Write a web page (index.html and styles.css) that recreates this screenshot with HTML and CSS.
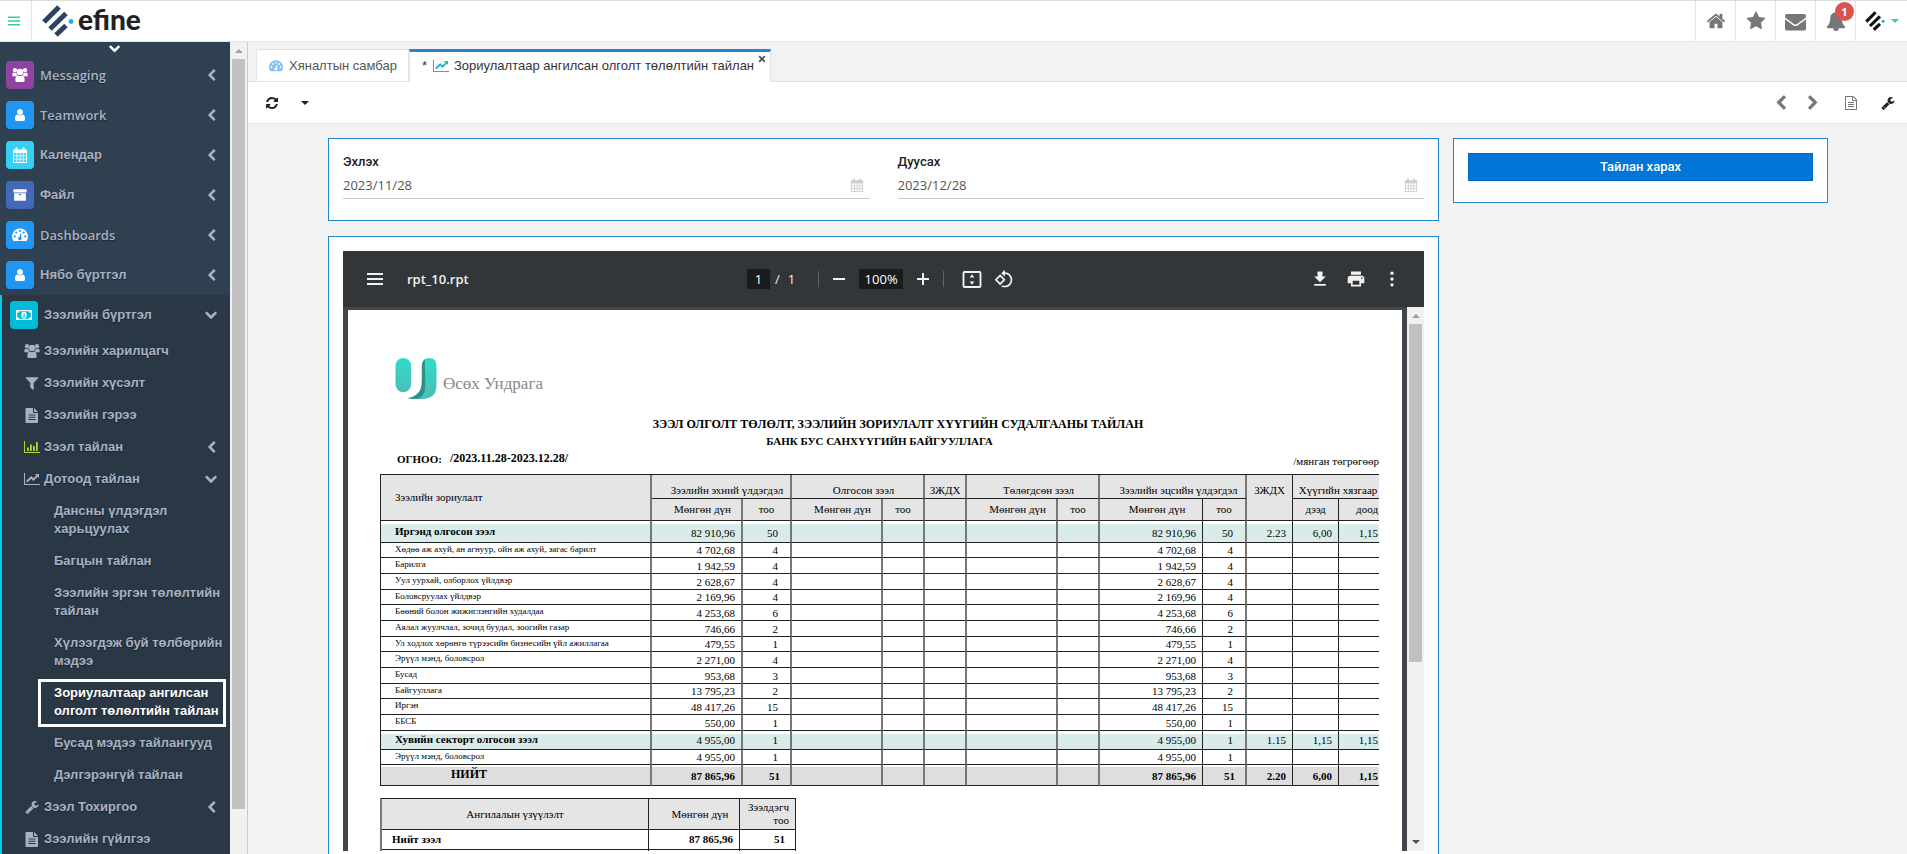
FILE: index.html
```
<!DOCTYPE html>
<html lang="mn">
<head>
<meta charset="utf-8">
<title>efine</title>
<link rel="stylesheet" href="styles.css">
</head>
<body>
<svg class="sprite" aria-hidden="true">
  <symbol id="home" viewBox="0 0 1792 1792"><path d="M1472 992v480q0 26-19 45t-45 19h-384v-384h-256v384h-384q-26 0-45-19t-19-45v-480q0-1 .5-3t.5-3l575-474 575 474q1 2 1 6zm223-69l-62 74q-8 9-21 11h-3q-13 0-21-7l-692-577-692 577q-12 8-24 7-13-2-21-11l-62-74q-8-10-7-23.5t11-21.5l719-599q32-26 76-26t76 26l244 204v-195q0-14 9-23t23-9h192q14 0 23 9t9 23v408l219 182q10 8 11 21.5t-7 23.5z"/></symbol>
  <symbol id="star" viewBox="0 0 1792 1792"><path d="M1728 647q0 22-26 48l-363 354 86 500q1 7 1 20 0 21-10.5 35.5t-30.5 14.5q-19 0-40-12l-449-236-449 236q-22 12-40 12-21 0-31.5-14.5t-10.5-35.5q0-6 2-20l86-500-364-354q-25-27-25-48 0-37 56-46l502-73 225-455q19-41 49-41t49 41l225 455 502 73q56 9 56 46z"/></symbol>
  <symbol id="mail" viewBox="0 0 1792 1792"><path d="M1792 710v794q0 66-47 113t-113 47h-1472q-66 0-113-47t-47-113v-794q44 49 101 87 362 246 497 345 57 42 92.5 65.5t94.5 48 110 24.5h2q51 0 110-24.5t94.5-48 92.5-65.5q170-123 498-345 57-39 100-87zm0-294q0 79-49 151t-122 123q-376 261-468 325-10 7-42.5 31t-54 38.5-52 32.5-57.5 27-50 9h-2q-23 0-50-9t-57.5-27-52-32.5-54-38.5-42.5-31q-91-64-262-182.5t-205-142.5q-62-42-117-115.5t-55-136.5q0-78 41.5-130t118.5-52h1472q65 0 112.5 47t47.5 113z"/></symbol>
  <symbol id="bell" viewBox="0 0 1792 1792"><path d="M1728 1408q0 52-38 90t-90 38h-448q0 106-75 181t-181 75-181-75-75-181h-448q-52 0-90-38t-38-90q50-42 91-88t85-119.5 74.5-158.5 50-206 19.5-260q0-152 117-282.5t307-158.5q-8-19-8-39 0-40 28-68t68-28 68 28 28 68q0 20-8 39 190 28 307 158.5t117 282.5q0 139 19.5 260t50 206 74.5 158.5 85 119.5 91 88z"/></symbol>
  <symbol id="left" viewBox="0 0 1792 1792"><path d="M1427 301l-531 531 531 531q19 19 19 45t-19 45l-166 166q-19 19-45 19t-45-19l-742-742q-19-19-19-45t19-45l742-742q19-19 45-19t45 19l166 166q19 19 19 45t-19 45z"/></symbol>
  <symbol id="right" viewBox="0 0 1792 1792"><path transform="translate(1792 0) scale(-1 1)" d="M1427 301l-531 531 531 531q19 19 19 45t-19 45l-166 166q-19 19-45 19t-45-19l-742-742q-19-19-19-45t19-45l742-742q19-19 45-19t45 19l166 166q19 19 19 45t-19 45z"/></symbol>
  <symbol id="down" viewBox="0 0 1792 1792"><path transform="rotate(-90 896 896)" d="M1427 301l-531 531 531 531q19 19 19 45t-19 45l-166 166q-19 19-45 19t-45-19l-742-742q-19-19-19-45t19-45l742-742q19-19 45-19t45 19l166 166q19 19 19 45t-19 45z"/></symbol>
  <symbol id="refresh" viewBox="0 0 1792 1792"><path d="M1639 1056q0 5-1 7-64 268-268 434.5t-478 166.5q-146 0-282.5-55t-243.5-157l-129 129q-19 19-45 19t-45-19-19-45v-448q0-26 19-45t45-19h448q26 0 45 19t19 45-19 45l-137 137q71 66 161 102t187 36q134 0 250-65t186-179q11-17 53-117 8-23 30-23h192q13 0 22.5 9.5t9.5 22.5zm25-800v448q0 26-19 45t-45 19h-448q-26 0-45-19t-19-45 19-45l138-138q-148-137-349-137-134 0-250 65t-186 179q-11 17-53 117-8 23-30 23h-199q-13 0-22.5-9.5t-9.5-22.5v-7q65-268 270-434.5t480-166.5q146 0 284 55.5t245 156.5l130-129q19-19 45-19t45 19 19 45z"/></symbol>
  <symbol id="wrench" viewBox="0 0 1792 1792"><path d="M448 1472q0-26-19-45t-45-19-45 19-19 45 19 45 45 19 45-19 19-45zm644-420l-682 682q-37 37-90 37-52 0-91-37l-106-108q-38-36-38-90 0-53 38-91l681-681q39 98 114.5 173.5t173.5 114.5zm634-435q0 39-23 106-47 134-164.5 217.5t-258.5 83.5q-185 0-316.5-131.5t-131.5-316.5 131.5-316.5 316.5-131.5q58 0 121.5 16.5t107.5 46.5q16 11 16 28t-16 28l-293 169v224l193 107q5-3 79-48.5t135.5-81 70.5-35.5q15 0 23.5 10t8.5 25z"/></symbol>
  <symbol id="doc" viewBox="0 0 1792 1792"><path d="M1596 380q28 28 48 76t20 88v1152q0 40-28 68t-68 28h-1344q-40 0-68-28t-28-68v-1600q0-40 28-68t68-28h896q40 0 88 20t76 48zm-444-244v376h376q-10-29-22-41l-313-313q-12-12-41-22zm384 1528v-1024h-416q-40 0-68-28t-28-68v-416h-768v1536h1280zm-1024-864q0-14 9-23t23-9h704q14 0 23 9t9 23v64q0 14-9 23t-23 9h-704q-14 0-23-9t-9-23v-64zm736 224q14 0 23 9t9 23v64q0 14-9 23t-23 9h-704q-14 0-23-9t-9-23v-64q0-14 9-23t23-9h704zm0 256q14 0 23 9t9 23v64q0 14-9 23t-23 9h-704q-14 0-23-9t-9-23v-64q0-14 9-23t23-9h704z"/></symbol>
  <symbol id="file" viewBox="0 0 16 16"><path fill-rule="evenodd" d="M2 1h7v5h5v9.200q0 .8-.8.8H2.300q-.8 0-.8-.8V1.500q0-.5.5-.5zM10 1l4 4h-4zM4.500 7.500v1h7v-1zm0 2.300v1h7v-1zm0 2.300v1h7v-1z"/></symbol>
  <symbol id="filter" viewBox="0 0 1792 1792"><path d="M1595 295q17 41-14 70l-493 493v742q0 42-39 59-13 5-25 5-27 0-45-19l-256-256q-19-19-19-45v-486l-493-493q-31-29-14-70 17-39 59-39h1280q42 0 59 39z"/></symbol>
  <symbol id="user" viewBox="0 0 1792 1792"><path d="M1536 1399q0 109-62.5 187t-150.5 78h-854q-88 0-150.5-78t-62.5-187q0-85 8.500-160.500t31.500-152 58.500-131 94-89 134.500-34.500q131 128 313 128t313-128q76 0 134.500 34.500t94 89 58.500 131 31.500 152 8.500 160.500zm-256-887q0 159-112.500 271.500t-271.500 112.500-271.500-112.500-112.500-271.500 112.500-271.500 271.500-112.500 271.500 112.500 112.500 271.500z"/></symbol>
  <symbol id="users" viewBox="0 0 16 16"><circle cx="3" cy="3.200" r="2.100"/><circle cx="13" cy="3.200" r="2.100"/><circle cx="8" cy="5" r="3.200"/><path d="M.3 8.800q-.2-3.200 1.500-3.400 1.200.7 2.500.2.200 2 1.200 2.700-1.100.1-1.700 1H1.200q-.9 0-.9-.5zM15.700 8.800q.2-3.200-1.500-3.400-1.200.7-2.500.2-.2 2-1.200 2.700 1.100.1 1.700 1h2.600q.9 0 .9-.5zM3.300 13.400q0-4.900 2.400-5 2.300 1.500 4.600 0 2.400.1 2.400 5 0 1.600-1.700 1.600H5q-1.700 0-1.700-1.600z"/></symbol>
  <symbol id="calendar" viewBox="0 0 16 16"><path fill-rule="evenodd" d="M2 2.500h1.500V1q0-.8 1-.8t1 .8v1.500h5V1q0-.8 1-.8t1 .8v1.500H14q1 0 1 1V15q0 1-1 1H2q-1 0-1-1V3.500q0-1 1-1zM2 6v2.500h2.500V6zm3.300 0v2.500h2.400V6zm3.200 0v2.500h2.300V6zm3.200 0v2.500H14V6zM2 9.300v2.400h2.500V9.300zm3.300 0v2.400h2.400V9.300zm3.200 0v2.400h2.300V9.300zm3.200 0v2.400H14V9.300zM2 12.500V15h2.500v-2.500zm3.300 0V15h2.400v-2.500zm3.200 0V15h2.300v-2.500zm3.200 0V15H14v-2.500z"/></symbol>
  <symbol id="archive" viewBox="0 0 16 16"><path fill-rule="evenodd" d="M.5 1.500h15v3.500H.5zM1.300 6h13.400v8.500H1.300zM6.500 7v1.200h3V7z"/></symbol>
  <symbol id="gauge" viewBox="0 0 16 16"><path fill-rule="evenodd" d="M8 1.500a8 8 0 0 1 6.900 12q-.3.500-.8.500H1.900q-.5 0-.8-.5A8 8 0 0 1 8 1.500zM8 3a1.100 1.100 0 1 0 0 2.200A1.100 1.100 0 0 0 8 3zM4.300 4.500a1.100 1.100 0 1 0 0 2.200 1.100 1.100 0 0 0 0-2.200zM11.700 4.500a1.100 1.100 0 1 0 0 2.200 1.100 1.100 0 0 0 0-2.200zM2.700 8.300a1.100 1.100 0 1 0 0 2.200 1.100 1.100 0 0 0 0-2.200zM13.300 8.300a1.100 1.100 0 1 0 0 2.200 1.100 1.100 0 0 0 0-2.200zM8.500 6.500l-.9 3.200a1.700 1.700 0 1 0 1.300.3l.8-3.200z"/></symbol>
  <symbol id="money" viewBox="0 0 16 16"><path fill-rule="evenodd" d="M0 3h16v10H0zM3 4.200q0 1.800-1.800 1.800v4q1.800 0 1.800 1.800h10q0-1.800 1.800-1.800V6Q13 6 13 4.200z"/><ellipse cx="8" cy="8" rx="2.700" ry="3.200"/><path class="cut" d="M7.200 6.600L8 6h.6v3.200h.6v.7H7v-.7h.7V7z"/></symbol>
  <symbol id="bars" viewBox="0 0 16 16"><path d="M0 2h1v11h15v1H0zM3 8.500h1.800V12H3zM6 5.500h1.800V12H6zM9 7h1.800v5H9zM12 3h1.800v9H12z"/></symbol>
  <symbol id="chart" viewBox="0 0 16 16"><path d="M0 2h1v11h15v1H0zM15 3v4l-1.300-1.300-4.200 4.200-2.300-2.200-3.900 3.800-1.300-1.400 5.200-5.100 2.300 2.200 2.800-2.800L11 3z"/></symbol>
  <symbol id="times" viewBox="0 0 10 10"><path d="M2.300.6L5 3.300 7.700.6l1.700 1.700L6.700 5l2.700 2.700-1.700 1.700L5 6.700 2.300 9.400.6 7.700 3.300 5 .6 2.300z"/></symbol>
  <symbol id="caret" viewBox="0 0 8 4"><path d="M0 0h8L4 4z"/></symbol>
  <symbol id="caret-up" viewBox="0 0 8 4"><path d="M0 4h8L4 0z"/></symbol>
  <symbol id="menu" viewBox="0 0 16 12"><path d="M0 0h16v2H0zM0 5h16v2H0zM0 10h16v2H0z"/></symbol>
  <symbol id="mark" viewBox="0 0 32 32"><g fill="none" stroke-width="5" stroke-linecap="butt"><path d="M2 17L17 2M8 24L24 8.500M14 30L24 20.500"/></g><circle cx="29" cy="16.500" r="2.400" fill="#29aae1" stroke="none"/></symbol>
  <symbol id="minus" viewBox="0 0 12 12"><path d="M0 5h12v2H0z"/></symbol>
  <symbol id="plus" viewBox="0 0 12 12"><path d="M0 5h5V0h2v5h5v2H7v5H5V7H0z"/></symbol>
  <symbol id="fit" viewBox="0 0 20 18"><rect x="1" y="1" width="18" height="16" rx="1" fill="none" stroke="currentColor" stroke-width="2"/><path d="M10 3.500L12.500 7h-5zM10 14.500L12.500 11h-5z"/></symbol>
  <symbol id="rotate" viewBox="0 0 24 24"><path d="M7.340 6.410L.86 12.900l6.490 6.480 6.490-6.480-6.500-6.490zM3.690 12.900l3.660-3.660L11 12.900l-3.660 3.660-3.650-3.660zm15.670-6.260A8.950 8.950 0 0 0 13 4V.76L8.760 5 13 9.240V6c1.790 0 3.580.68 4.950 2.050a7.007 7.007 0 0 1 0 9.900 6.973 6.973 0 0 1-7.790 1.440l-1.490 1.490C10.020 21.620 11.510 22 13 22c2.300 0 4.610-.88 6.360-2.640a8.980 8.980 0 0 0 0-12.720z"/></symbol>
  <symbol id="download" viewBox="0 0 24 24"><path d="M19 9h-4V3H9v6H5l7 7 7-7zM5 18v2h14v-2H5z"/></symbol>
  <symbol id="print" viewBox="0 0 24 24"><path d="M19 8H5c-1.660 0-3 1.340-3 3v6h4v4h12v-4h4v-6c0-1.660-1.340-3-3-3zm-3 11H8v-5h8v5zm3-7c-.55 0-1-.45-1-1s.45-1 1-1 1 .45 1 1-.45 1-1 1zm-1-9H6v4h12V3z"/></symbol>
  <symbol id="dots" viewBox="0 0 24 24"><circle cx="12" cy="5" r="2"/><circle cx="12" cy="12" r="2"/><circle cx="12" cy="19" r="2"/></symbol>
  <linearGradient id="teal" x1="0" y1="0" x2="0" y2="1"><stop offset="0" stop-color="#2fdcc8"/><stop offset="1" stop-color="#4bbdb8"/></linearGradient>
</svg>

<header class="topbar">
  <button class="toggle" aria-label="Цэс"><svg><use href="#menu"/></svg></button>
  <a class="brand" href="#"><svg><use href="#mark"/></svg><span>efine</span></a>
  <nav class="top-actions">
    <a href="#" aria-label="Нүүр"><svg class="i20"><use href="#home"/></svg></a>
    <a href="#" aria-label="Онцлох"><svg class="i20"><use href="#star"/></svg></a>
    <a href="#" aria-label="Захидал"><svg class="i21"><use href="#mail"/></svg></a>
    <a href="#" aria-label="Мэдэгдэл"><svg class="i20"><use href="#bell"/></svg><span class="badge">1</span></a>
    <a class="account" href="#" aria-label="Хэрэглэгч"><svg class="i20 dark"><use href="#mark"/></svg><svg class="caret green"><use href="#caret"/></svg></a>
  </nav>
</header>

<div class="app">
  <nav class="sidebar">
    <div class="menu">
      <div class="scroll-hint"><svg class="i12"><use href="#down"/></svg></div>
      <a class="item latin" href="#"><span class="tile purple"><svg class="i16"><use href="#users"/></svg></span>Messaging<svg class="chev"><use href="#left"/></svg></a>
      <a class="item latin" href="#"><span class="tile blue"><svg class="i14"><use href="#user"/></svg></span>Teamwork<svg class="chev"><use href="#left"/></svg></a>
      <a class="item" href="#"><span class="tile cyan"><svg class="i16"><use href="#calendar"/></svg></span>Календар<svg class="chev"><use href="#left"/></svg></a>
      <a class="item" href="#"><span class="tile indigo"><svg class="i14"><use href="#archive"/></svg></span>Файл<svg class="chev"><use href="#left"/></svg></a>
      <a class="item latin" href="#"><span class="tile blue"><svg class="i16"><use href="#gauge"/></svg></span>Dashboards<svg class="chev"><use href="#left"/></svg></a>
      <a class="item" href="#"><span class="tile blue"><svg class="i14"><use href="#user"/></svg></span>Нябо бүртгэл<svg class="chev"><use href="#left"/></svg></a>
      <div class="group">
        <a class="item" href="#"><span class="tile teal"><svg class="i16"><use href="#money"/></svg></span>Зээлийн бүртгэл<svg class="chev"><use href="#down"/></svg></a>
        <a class="sub" href="#"><svg class="i16"><use href="#users"/></svg>Зээлийн харилцагч</a>
        <a class="sub" href="#"><svg class="i16"><use href="#filter"/></svg>Зээлийн хүсэлт</a>
        <a class="sub" href="#"><svg class="i16"><use href="#file"/></svg>Зээлийн гэрээ</a>
        <a class="sub" href="#"><svg class="i16 lime"><use href="#bars"/></svg>Зээл тайлан<svg class="chev"><use href="#left"/></svg></a>
        <a class="sub" href="#"><svg class="i16"><use href="#chart"/></svg>Дотоод тайлан<svg class="chev"><use href="#down"/></svg></a>
        <a class="leaf" href="#">Дансны үлдэгдэл харьцуулах</a>
        <a class="leaf" href="#">Багцын тайлан</a>
        <a class="leaf" href="#">Зээлийн эргэн төлөлтийн тайлан</a>
        <a class="leaf" href="#">Хүлээгдэж буй төлбөрийн мэдээ</a>
        <a class="leaf current" href="#">Зориулалтаар ангилсан олголт төлөлтийн тайлан</a>
        <a class="leaf" href="#">Бусад мэдээ тайлангууд</a>
        <a class="leaf" href="#">Дэлгэрэнгүй тайлан</a>
        <a class="sub" href="#"><svg class="i14 inset"><use href="#wrench"/></svg>Зээл Тохиргоо<svg class="chev"><use href="#left"/></svg></a>
        <a class="sub" href="#"><svg class="i16"><use href="#file"/></svg>Зээлийн гүйлгээ</a>
      </div>
    </div>
    <div class="scrollbar"><svg class="caret"><use href="#caret-up"/></svg><div class="thumb side-thumb"></div></div>
  </nav>

  <main class="main">
    <div class="tabs">
      <a class="tab" href="#"><svg class="i14 sky"><use href="#gauge"/></svg>Хяналтын самбар</a>
      <a class="tab active" href="#"><span>*</span><svg class="i16 aqua"><use href="#chart"/></svg>Зориулалтаар ангилсан олголт төлөлтийн тайлан<svg class="close"><use href="#times"/></svg></a>
    </div>
    <div class="toolbar">
      <button aria-label="Сэргээх"><svg class="i14 dark"><use href="#refresh"/></svg></button>
      <button class="drop" aria-label="Бусад"><svg class="caret dark"><use href="#caret"/></svg></button>
      <span class="spacer"></span>
      <button aria-label="Өмнөх"><svg class="i16"><use href="#left"/></svg></button>
      <button class="next" aria-label="Дараах"><svg class="i16"><use href="#right"/></svg></button>
      <button class="log" aria-label="Баримт"><svg class="i14"><use href="#doc"/></svg></button>
      <button class="tool" aria-label="Тохиргоо"><svg class="i14 dark"><use href="#wrench"/></svg></button>
    </div>
    <div class="content">
      <div class="col-main">
        <form class="card filters">
          <div class="field"><label for="from">Эхлэх</label><div class="control"><input id="from" type="text" value="2023/11/28"><svg class="i14"><use href="#calendar"/></svg></div></div>
          <div class="field"><label for="to">Дуусах</label><div class="control"><input id="to" type="text" value="2023/12/28"><svg class="i14"><use href="#calendar"/></svg></div></div>
        </form>
        <section class="card">
          <div class="viewer">
            <div class="viewer-bar">
              <div class="bar-side"><button aria-label="Цэс"><svg class="pdf-menu"><use href="#menu"/></svg></button><span class="doc-name">rpt_10.rpt</span></div>
              <div class="bar-mid">
                <input class="page-no" type="text" value="1" aria-label="Хуудас"><span class="slash">/</span><span>1</span>
                <i class="rule"></i>
                <button aria-label="Багасгах"><svg class="i12"><use href="#minus"/></svg></button>
                <input class="zoom" type="text" value="100%" aria-label="Томруулалт">
                <button aria-label="Томруулах"><svg class="i12"><use href="#plus"/></svg></button>
                <i class="rule tight"></i>
                <button class="fit" aria-label="Тааруулах"><svg><use href="#fit"/></svg></button>
                <button aria-label="Эргүүлэх"><svg class="i20"><use href="#rotate"/></svg></button>
              </div>
              <div class="bar-side end">
                <button aria-label="Татах"><svg class="i20"><use href="#download"/></svg></button>
                <button aria-label="Хэвлэх"><svg class="i20"><use href="#print"/></svg></button>
                <button aria-label="Бусад"><svg class="i20"><use href="#dots"/></svg></button>
              </div>
            </div>
            <div class="viewer-body">
              <div class="sheet">
                <div class="sheet-inner">
                  <div class="org">
                    <svg viewBox="0 0 42 42"><rect x="0" y="0" width="16" height="35" rx="8" fill="url(#teal)"/><path d="M27 8q0-8 7.500-8T42 8v20q0 14-15 14H12q8-2 12-7 3-4 3-12z" fill="url(#teal)"/><path d="M31 1q-4 2-4 7v15q0 10-4 13-4 4-11 5l10 1q7-2 8-9 1-4 0-30z" fill="#2e8f8a"/></svg>
                    <span>Өсөх Ундрага</span>
                  </div>
                  <h1>ЗЭЭЛ ОЛГОЛТ ТӨЛӨЛТ, ЗЭЭЛИЙН ЗОРИУЛАЛТ ХҮҮГИЙН СУДАЛГААНЫ ТАЙЛАН</h1>
                  <h2>БАНК БУС САНХҮҮГИЙН БАЙГУУЛЛАГА</h2>
                  <div class="meta"><b class="cap">ОГНОО:</b><b class="range">/2023.11.28-2023.12.28/</b><span class="unit">/мянган төгрөгөөр</span></div>
                  <table class="report">
                    <colgroup><col class="w-name"><col class="w-sum"><col class="w-cnt1"><col class="w-sum"><col class="w-cnt"><col class="w-cnt"><col class="w-sum"><col class="w-cnt"><col class="w-sum2"><col class="w-cnt2"><col class="w-rate"><col class="w-rate"><col class="w-rate"></colgroup>
                    <thead>
                      <tr class="h1"><th rowspan="2" class="name">Зээлийн зориулалт</th><th colspan="2" class="line shift">Зээлийн эхний үлдэгдэл</th><th colspan="2" class="line shift">Олгосон зээл</th><th class="line">ЗЖДХ</th><th colspan="2" class="line shift">Төлөгдсөн зээл</th><th colspan="2" class="line shift">Зээлийн эцсийн үлдэгдэл</th><th rowspan="2" class="top">ЗЖДХ</th><th colspan="2" class="line">Хүүгийн хязгаар</th></tr>
                      <tr class="h2"><th class="shift">Мөнгөн дүн</th><th>тоо</th><th class="shift">Мөнгөн дүн</th><th>тоо</th><th></th><th class="shift">Мөнгөн дүн</th><th>тоо</th><th class="shift">Мөнгөн дүн</th><th>тоо</th><th>дээд</th><th class="shift">доод</th></tr>
                    </thead>
                    <tbody><tr class="mark"><td>Иргэнд олгосон зээл</td><td>82 910,96</td><td>50</td><td></td><td></td><td></td><td></td><td></td><td>82 910,96</td><td>50</td><td>2.23</td><td>6,00</td><td>1,15</td></tr></tbody>
                    <tbody class="rows">
                      <tr><td>Хөдөө аж ахуй, ан агнуур, ойн аж ахуй, загас барилт</td><td>4 702,68</td><td>4</td><td></td><td></td><td></td><td></td><td></td><td>4 702,68</td><td>4</td><td></td><td></td><td></td></tr>
                      <tr><td>Барилга</td><td>1 942,59</td><td>4</td><td></td><td></td><td></td><td></td><td></td><td>1 942,59</td><td>4</td><td></td><td></td><td></td></tr>
                      <tr><td>Уул уурхай, олборлох үйлдвэр</td><td>2 628,67</td><td>4</td><td></td><td></td><td></td><td></td><td></td><td>2 628,67</td><td>4</td><td></td><td></td><td></td></tr>
                      <tr><td>Боловсруулах үйлдвэр</td><td>2 169,96</td><td>4</td><td></td><td></td><td></td><td></td><td></td><td>2 169,96</td><td>4</td><td></td><td></td><td></td></tr>
                      <tr><td>Бөөний болон жижиглэнгийн худалдаа</td><td>4 253,68</td><td>6</td><td></td><td></td><td></td><td></td><td></td><td>4 253,68</td><td>6</td><td></td><td></td><td></td></tr>
                      <tr><td>Аялал жуулчлал, зочид буудал, зоогийн газар</td><td>746,66</td><td>2</td><td></td><td></td><td></td><td></td><td></td><td>746,66</td><td>2</td><td></td><td></td><td></td></tr>
                      <tr><td>Ул ходлох хөрөнгө түрээсийн бизнесийн үйл ажиллагаа</td><td>479,55</td><td>1</td><td></td><td></td><td></td><td></td><td></td><td>479,55</td><td>1</td><td></td><td></td><td></td></tr>
                      <tr><td>Эрүүл мэнд, боловсрол</td><td>2 271,00</td><td>4</td><td></td><td></td><td></td><td></td><td></td><td>2 271,00</td><td>4</td><td></td><td></td><td></td></tr>
                      <tr><td>Бусад</td><td>953,68</td><td>3</td><td></td><td></td><td></td><td></td><td></td><td>953,68</td><td>3</td><td></td><td></td><td></td></tr>
                      <tr><td>Байгууллага</td><td>13 795,23</td><td>2</td><td></td><td></td><td></td><td></td><td></td><td>13 795,23</td><td>2</td><td></td><td></td><td></td></tr>
                      <tr><td>Иргэн</td><td>48 417,26</td><td>15</td><td></td><td></td><td></td><td></td><td></td><td>48 417,26</td><td>15</td><td></td><td></td><td></td></tr>
                      <tr><td>ББСБ</td><td>550,00</td><td>1</td><td></td><td></td><td></td><td></td><td></td><td>550,00</td><td>1</td><td></td><td></td><td></td></tr>
                    </tbody>
                    <tbody>
                      <tr class="mark short"><td>Хувийн секторт олгосон зээл</td><td>4 955,00</td><td>1</td><td></td><td></td><td></td><td></td><td></td><td>4 955,00</td><td>1</td><td>1.15</td><td>1,15</td><td>1,15</td></tr>
                      <tr class="single"><td>Эрүүл мэнд, боловсрол</td><td>4 955,00</td><td>1</td><td></td><td></td><td></td><td></td><td></td><td>4 955,00</td><td>1</td><td></td><td></td><td></td></tr>
                      <tr class="total"><td>НИЙТ</td><td>87 865,96</td><td>51</td><td></td><td></td><td></td><td></td><td></td><td>87 865,96</td><td>51</td><td>2.20</td><td>6,00</td><td>1,15</td></tr>
                    </tbody>
                  </table>
                  <table class="summary">
                    <thead><tr><th>Ангилалын үзүүлэлт</th><th>Мөнгөн дүн</th><th class="end">Зээлдэгч тоо</th></tr></thead>
                    <tbody><tr><td>Нийт зээл</td><td class="end">87 865,96</td><td class="end">51</td></tr><tr><td></td><td></td><td></td></tr></tbody>
                  </table>
                </div>
              </div>
              <div class="scrollbar"><svg class="caret"><use href="#caret-up"/></svg><div class="thumb doc-thumb"></div><svg class="caret last"><use href="#caret"/></svg></div>
            </div>
          </div>
        </section>
      </div>
      <aside class="card col-side"><button class="primary">Тайлан харах</button></aside>
    </div>
  </main>
</div>
</body>
</html>
```
FILE: styles.css
```
* { box-sizing: border-box; }
body {
  margin: 0;
  height: 100vh;
  display: flex;
  flex-direction: column;
  overflow: hidden;
  font: 13px/18px "Liberation Sans", sans-serif;
  color: #333;
  background: #f2f2f2;
}
a { color: inherit; text-decoration: none; }
button { border: 0; padding: 0; background: none; color: inherit; font: inherit; display: flex; align-items: center; justify-content: center; }
svg { fill: currentColor; flex: none; display: block; }
.sprite { position: absolute; width: 0; height: 0; }
.i12 { width: 12px; height: 12px; }
.i14 { width: 14px; height: 14px; }
.i16 { width: 16px; height: 16px; }
.i20 { width: 20px; height: 20px; }
.i21 { width: 21px; height: 21px; }
.caret { width: 8px; height: 4px; }
.dark { color: #222; }
.green { color: #37d08c; }
.lime { color: #b5d334; }
.sky { color: #82c0f5; }
.aqua { color: #18bcd8; }

/* Top bar */
.topbar { flex: none; height: 42px; display: flex; background: #fff; border-top: 1px solid #ddd; border-bottom: 1px solid #e4e4e4; }
.toggle { width: 32px; border-right: 1px solid #e4e4e4; color: #37cf8f; padding-right: 4px; }
.toggle svg { width: 12px; height: 10px; }
.brand { display: flex; align-items: center; gap: 4px; padding-left: 10px; font: 900 28px/30px Lato, sans-serif; color: #222; }
.brand span { padding-bottom: 4px; }
.brand svg { width: 32px; height: 32px; stroke: #2c4262; }
.top-actions { margin-left: auto; display: flex; color: #777; }
.top-actions a { position: relative; width: 40px; border-left: 1px solid #e4e4e4; display: flex; align-items: center; justify-content: center; }
.top-actions .account { width: 52px; gap: 6px; }
.account svg { stroke: #111; }
.account .caret { stroke: none; }
.badge { position: absolute; right: 1px; top: 1px; width: 19px; height: 19px; border-radius: 50%; background: #d9534f; color: #fff; text-align: center; font: 700 11px/19px "Open Sans", sans-serif; }

/* Sidebar */
.app { flex: 1; min-height: 0; display: flex; }
.sidebar { flex: none; display: flex; }
.menu { width: 230px; overflow: hidden; background: #2f4050; color: #a7b1c2; font-weight: 700; text-shadow: 0 1px 1px #1a2430; }
.scroll-hint { height: 13px; display: flex; align-items: center; justify-content: center; color: #fff; }
.item { height: 40px; display: flex; align-items: center; padding: 0 12px 0 6px; }
.latin { font: 600 13px/18px "Open Sans", sans-serif; }
.tile { width: 28px; height: 28px; margin-right: 6px; border-radius: 4px; color: #fff; display: flex; align-items: center; justify-content: center; }
.purple { background: #8e44a0; }
.blue { background: #2196f3; }
.cyan { background: #36cff5; }
.indigo { background: #436ab8; }
.teal { background: #00bcd8; }
.cut { fill: #00bcd8; }
.chev { width: 13px; height: 13px; margin-left: auto; }
.group { background: #2a3845; border-left: 2px solid #00d0ea; }
.group .item { padding-left: 8px; }
.sub { display: flex; align-items: center; padding: 7px 12px 7px 22px; }
.sub .i16 { margin-right: 4px; }
.sub .inset { margin: 0 5px 0 1px; }
.leaf { display: block; position: relative; padding: 7px 4px 7px 52px; }
.current { color: #fff; }
.current::after { content: ""; position: absolute; inset: 2px 4px 0 36px; border: 3px solid #fff; }

/* Drawn scrollbars */
.scrollbar { width: 17px; background: #f1f1f1; display: flex; flex-direction: column; align-items: center; padding: 7px 0; color: #a0a0a0; }
.thumb { width: 13px; margin-top: 6px; background: #c1c1c1; }
.side-thumb { height: 94%; }
.doc-thumb { height: 338px; }
.scrollbar .last { margin-top: auto; color: #505050; }

/* Workspace */
.main { flex: 1; min-width: 0; display: flex; flex-direction: column; border-left: 1px solid #ccc; }
.tabs { flex: none; height: 40px; display: flex; align-items: flex-end; padding-left: 8px; border-bottom: 1px solid #e4e4e4; }
.tab { height: 32px; display: flex; align-items: center; gap: 6px; padding: 0 11px 0 12px; background: #fff; border: 1px solid #e4e4e4; border-bottom: 0; color: #555; }
.tab.active { position: relative; height: 33px; gap: 5px; margin-bottom: -1px; padding: 0 16px 2px 12px; border-top: 3px solid #2385d0; color: #333; }
.tab .aqua { margin-left: 1px; }
.close { position: absolute; right: 4px; top: 3px; width: 8px; height: 8px; color: #555; }
.toolbar { flex: none; height: 42px; display: flex; align-items: center; padding: 0 12px 0 17px; background: #fff; border-bottom: 1px solid #e4e4e4; color: #777; }
.drop { margin-left: 22px; }
.spacer { flex: 1; }
.next { margin-left: 16px; }
.log { margin-left: 23px; }
.tool { margin-left: 23px; }
.content { display: grid; grid-template-columns: minmax(0, 1111fr) minmax(0, 375fr); align-items: start; gap: 14px; padding: 14px 79px 0 80px; }
.card { background: #fff; border: 1px solid #2385d0; padding: 12px 14px; }
.col-main { display: flex; flex-direction: column; gap: 15px; }
.col-side { padding: 14px 14px 21px; }
.primary { width: 100%; height: 28px; background: #0275d8; border: 1px solid #0268c2; color: #fff; font: 500 13px/18px Roboto, sans-serif; }
.filters { display: flex; gap: 28px; padding-bottom: 21px; }
.field { flex: 1; min-width: 0; }
.field label { display: block; padding-top: 2px; font: 500 13px/18px Roboto, sans-serif; color: #222; }
.control { display: flex; align-items: center; margin-top: 1px; padding-right: 6px; border-bottom: 1px solid #ccc; color: #ccc; }
.control input { flex: 1; min-width: 0; height: 26px; border: 0; padding: 0; background: none; font: 13px/18px "Open Sans", sans-serif; color: #555; }

/* Document viewer */
.viewer { height: 600px; margin-top: 2px; background: #42464a; display: flex; flex-direction: column; }
.viewer-bar { flex: none; height: 56px; background: #323639; color: #f1f1f1; display: flex; align-items: center; padding: 0 22px 0 24px; font: 13px/18px "Open Sans", sans-serif; }
.bar-side { flex: 1; display: flex; align-items: center; gap: 24px; }
.bar-side.end { justify-content: flex-end; gap: 16px; }
.pdf-menu { width: 16px; height: 12px; }
.doc-name { font-weight: 600; }
.bar-mid { display: flex; align-items: center; padding-right: 8px; }
.bar-mid input { height: 20px; border: 0; padding: 0; background: #191b1c; color: #fff; font: inherit; text-align: center; }
.page-no { width: 23px; }
.slash { margin: 0 8px 0 5px; }
.rule { width: 1px; height: 16px; margin: 0 14px 0 23px; background: #5f6368; }
.rule.tight { margin: 0 18px 0 14px; }
.zoom { width: 44px; margin: 0 14px; }
.fit { margin-right: 12px; }
.fit svg { width: 20px; height: 17px; }
.viewer-body { flex: 1; min-height: 0; display: flex; padding-left: 5px; }
.sheet { flex: 1; min-width: 0; margin: 3px 5px 0 0; padding: 48px 23px 0 32px; background: #fff; overflow: hidden; font: 11px/13px "Liberation Serif", serif; color: #000; }
.sheet-inner { overflow: hidden; }
.org { display: flex; gap: 6px; padding-left: 15px; font-size: 17px; line-height: 20px; color: #888; }
.org svg { width: 42px; height: 41px; }
.org span { padding-top: 16px; }
.sheet h1, .sheet h2 { margin: 0; text-align: center; line-height: 17px; }
.sheet h1 { margin-top: 17px; padding-left: 37px; font-size: 12px; }
.sheet h2 { font-size: 11px; }
.meta { display: flex; height: 24px; padding-left: 17px; line-height: 17px; white-space: nowrap; }
.cap { width: 53px; padding-top: 1px; }
.range { font-size: 12px; }
.unit { margin-left: auto; padding-top: 3px; }
table { border-collapse: separate; border-spacing: 0; table-layout: fixed; }
th { font-weight: 400; }
th, td { padding: 0; white-space: nowrap; }
.report { width: 1005px; border-left: 1px solid #222; border-top: 1px solid #222; }
.report th, .report td { border-right: 2px solid #777; border-bottom: 1px solid #222; }
.report td:nth-child(9), .report td:nth-child(n+11), .report .top, .report tr.h2 th:nth-child(8), .report tr.h2 th:nth-child(10) { border-right: 1px solid #222; }
.w-name { width: 271px; }
.w-sum { width: 91px; }
.w-sum2 { width: 103px; }
.w-cnt1 { width: 49px; }
.w-cnt { width: 42px; }
.w-cnt2 { width: 44px; }
.w-rate { width: 46px; }
.report th { background: #e5e5e5; }
.report .name { text-align: left; padding: 0 0 0 14px; }
.report .h1 th { height: 24px; padding-top: 7px; }
.report .h1 .name { padding-top: 0; }
.report .h2 th { height: 22px; }
.report .shift { padding-left: 12px; }
.report .h1 .top { vertical-align: top; padding-top: 9px; }
.report td { height: 16px; text-align: right; vertical-align: bottom; padding-right: 6px; }
.report .rows tr:nth-child(3n+1) td, .report .single td { height: 15px; }
.report td:first-child { text-align: left; vertical-align: top; padding-left: 14px; font-size: 9px; line-height: 12px; }
.report td:nth-child(3), .report td:nth-child(10) { padding-right: 12px; }
.report .mark td { height: 22px; padding-bottom: 2px; background: linear-gradient(#fff 3px, #d9ecea 3px); }
.report .short td { height: 19px; }
.report .mark td:first-child, .report .total td:first-child { font-size: 11px; font-weight: 700; vertical-align: middle; }
.report .total td { height: 21px; padding-bottom: 2px; font-weight: 700; background: linear-gradient(#fff 2px, #dedede 2px); }
.report .total td:first-child { padding-left: 70px; font-size: 12px; }
.report .total td:nth-child(3), .report .total td:nth-child(10) { padding-right: 10px; }
.summary { width: 416px; margin-top: 12px; border-left: 2px solid #777; border-top: 1px solid #222; }
.summary th, .summary td { border-right: 1px solid #222; border-bottom: 1px solid #222; height: 20px; }
.summary th { height: 31px; background: #e5e5e5; white-space: normal; }
.summary th:nth-child(1) { width: 267px; }
.summary th:nth-child(2) { width: 91px; padding-left: 12px; }
.summary .end { text-align: right; padding-right: 6px; }
.summary td { font-weight: 700; padding-left: 10px; }
.summary td.end:last-child { padding-right: 10px; }
```
